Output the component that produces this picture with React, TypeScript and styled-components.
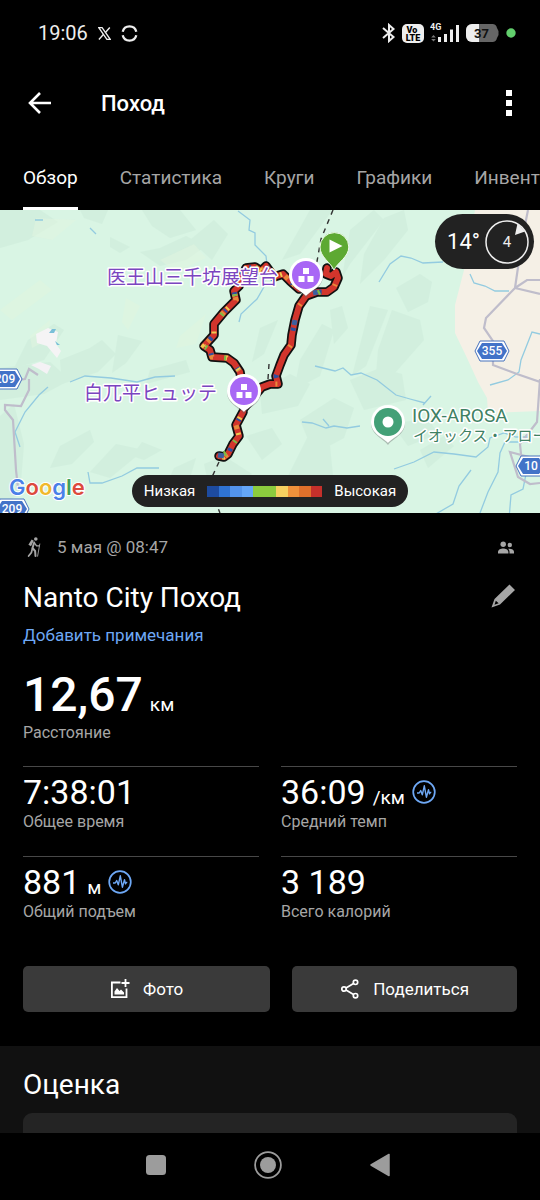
import React from 'react';
import styled, { createGlobalStyle } from 'styled-components';

const GlobalStyle = createGlobalStyle`
  * { box-sizing: border-box; }
  html, body { margin: 0; background: #000; }
  body {
    font-family: Roboto, "Noto Sans CJK JP", sans-serif;
    color: #fff;
    overflow-x: hidden;
  }
  button { font: inherit; color: inherit; border: 0; padding: 0; background: none; cursor: pointer; }
  svg { display: block; flex: none; }
`;

const Screen = styled.div`
  min-height: 100vh;
  display: flex;
  flex-direction: column;
  background: #000;
  overflow: hidden;
`;

const StatusBar = styled.div`
  height: 66px;
  padding: 0 24px 0 38px;
  display: flex;
  align-items: center;
  justify-content: space-between;
`;

const StatusGroup = styled.div<{ $gap: number }>`
  display: flex;
  align-items: center;
  gap: ${(p) => p.$gap}px;
`;

const Clock = styled.span`
  font-size: 20px;
  line-height: 24px;
  color: #eee;
`;

const AppBar = styled.header`
  height: 76px;
  padding: 0 24px 0 26px;
  display: flex;
  align-items: center;
`;

const IconButton = styled.button`
  display: flex;
  align-items: center;
  justify-content: center;
`;

const ScreenTitle = styled.h1`
  flex: 1;
  margin: 0 0 0 48px;
  font-size: 22px;
  line-height: 28px;
  font-weight: 500;
`;

const Tabs = styled.nav`
  height: 68px;
  padding-left: 23px;
  display: flex;
  gap: 42px;
  overflow: hidden;
`;

const Tab = styled.button<{ $active?: boolean }>`
  flex: none;
  height: 68px;
  font-size: 19px;
  line-height: 24px;
  padding-top: 6px;
  color: ${(p) => (p.$active ? '#fff' : '#a6a6a6')};
  border-bottom: 3px solid ${(p) => (p.$active ? '#fff' : 'transparent')};
`;

const MapArea = styled.section`
  position: relative;
  height: 303px;
  background: #d9f5e4;
  overflow: hidden;
  display: flex;
  flex-direction: column;
  justify-content: space-between;
`;

const MapCanvas = styled.svg`
  position: absolute;
  inset: 0;
  width: 100%;
  height: 100%;
`;

const Weather = styled.div`
  position: relative;
  align-self: flex-end;
  margin: 4px 6px 0 0;
  height: 55px;
  padding: 0 4px 0 12px;
  border-radius: 28px;
  background: #222;
  display: flex;
  align-items: center;
  gap: 4px;
  font-size: 22px;
`;

const Legend = styled.div`
  position: relative;
  align-self: center;
  margin-bottom: 6px;
  height: 32px;
  padding: 0 12px;
  border-radius: 16px;
  background: #222;
  display: flex;
  align-items: center;
  gap: 12px;
  font-size: 15px;
`;

const Scale = styled.div`
  display: flex;
  width: 115px;
  height: 11px;
`;

const ScaleStep = styled.span<{ $color: string }>`
  flex: 1;
  background: ${(p) => p.$color};
`;

const Summary = styled.main`
  padding: 0 23px 34px;
`;

const MetaRow = styled.div`
  height: 68px;
  display: flex;
  align-items: center;
  padding-right: 3px;
  color: #a6a6a6;
  font-size: 17px;
`;

const MetaDate = styled.span`
  flex: 1;
  margin-left: 13px;
`;

const TitleRow = styled.div`
  display: flex;
  align-items: center;
  justify-content: space-between;
  padding-right: 2px;
`;

const Title = styled.h2`
  margin: 0;
  font-size: 28px;
  line-height: 34px;
  font-weight: 400;
`;

const NotesLink = styled.a`
  display: block;
  width: fit-content;
  margin: 8px 0 20px;
  font-size: 17px;
  line-height: 24px;
  color: #6ea8f5;
  text-decoration: none;
`;

const Value = styled.div<{ $large?: boolean }>`
  display: flex;
  align-items: baseline;
  gap: 7px;
  height: ${(p) => (p.$large ? 56 : 40)}px;
  font-size: ${(p) => (p.$large ? 48 : 34)}px;
  line-height: ${(p) => (p.$large ? 56 : 40)}px;
  font-weight: ${(p) => (p.$large ? 500 : 400)};
`;

const Unit = styled.span`
  font-size: 19px;
  line-height: 24px;
  font-weight: 400;
`;

const Badge = styled.span`
  align-self: center;
`;

const Label = styled.div`
  font-size: 16px;
  line-height: 20px;
  color: #a6a6a6;
`;

const StatGrid = styled.div`
  margin-top: 23px;
  display: grid;
  grid-template-columns: 1fr 1fr;
  gap: 24px 22px;
`;

const Stat = styled.div`
  border-top: 1px solid #484848;
  padding-top: 5px;
`;

const Actions = styled.div`
  margin-top: 44px;
  display: grid;
  grid-template-columns: 11fr 10fr;
  gap: 22px;
`;

const ActionButton = styled.button`
  height: 46px;
  border-radius: 5px;
  background: #3a3a3a;
  display: flex;
  align-items: center;
  justify-content: center;
  gap: 13px;
  font-size: 17px;
`;

const Rating = styled.section`
  flex: 1;
  padding: 22px 23px 0;
  background: #111;
  display: flex;
  flex-direction: column;
`;

const RatingCard = styled.div`
  flex: 1;
  min-height: 19px;
  margin-top: 11px;
  border-radius: 9px 9px 0 0;
  background: #242424;
`;

const SystemNav = styled.nav`
  height: 67px;
  padding: 0 4px 4px 0;
  display: flex;
  justify-content: center;
  align-items: center;
`;

const SystemButton = styled.button`
  width: 112px;
  height: 48px;
  display: flex;
  align-items: center;
  justify-content: center;
`;

const TrendIcon = () => (
  <svg width="24" height="24" viewBox="0 0 24 24" fill="none" stroke="#6ea8f5">
    <circle cx="12" cy="12" r="10.8" strokeWidth="1.7" />
    <path d="M5 13h2.2l1.5-2.4 1.6 4.2 2-9 2.1 11.4 2.1-7.6 1 4.2 1-1.4h.8" strokeWidth="1.4" strokeLinejoin="round" />
  </svg>
);

const HikerIcon = () => (
  <svg width="21" height="22" viewBox="0 0 21 22" fill="none" stroke="#a6a6a6" strokeLinecap="round">
    <circle cx="12.8" cy="3" r="1.8" fill="#a6a6a6" stroke="none" />
    <path d="M8.600 3.600 5.400 8.800l2.600 1.400 2.800-5.400z" fill="#a6a6a6" stroke="none" />
    <path d="M11.200 6.500 9.500 12l2.600 3 .4 5" strokeWidth="2" />
    <path d="m9.400 12.500-1 4L5.600 20" strokeWidth="1.700" />
    <path d="m11.800 7.500 1.800 2.400h2.600" strokeWidth="1.300" />
    <path d="m16.800 8-2.200 12.200" strokeWidth=".9" />
  </svg>
);

const PeopleIcon = () => (
  <svg width="16" height="13" viewBox="0 0 16 13" fill="#a6a6a6">
    <circle cx="5.200" cy="3.200" r="2.700" />
    <circle cx="11.800" cy="4" r="2.200" />
    <path d="M0 12.500V11c0-2.600 3-3.600 5.200-3.600S10.400 8.400 10.400 11v1.500zM11.500 12.500V11c0-1.400-.5-2.400-1.300-3.200 2.800-.4 5.800.6 5.800 3v1.700z" />
  </svg>
);

const SCALE = ['#1d4b9f', '#2f73d2', '#5394ec', '#64a6f8', '#8ccb3e', '#8ccb3e', '#f7d060', '#f0913b', '#e0702b', '#c4302b'];

const ROUTES = [
  'M327 58 L326 64 L331 66 L336 62 L338 68 L334 77 L327 82 L317 82 L306 86 L299 96 L295 110 L292 125 L291 135 L284 145 L280 155 L276 166 L278 174 L270 174 L262 177 L244 198',
  'M299 79 L290 71 L283 64 L274 67 L266 56 L261 61 L255 57 L246 58 L239 76 L234 81 L236 90 L224 102 L214 114 L214 125 L204 136 L210 140 L212 147 L227 148 L234 153 L240 162 L243 180',
  'M243 202 L236 215 L239 226 L233 234 L228 244 L224 247 L219 246',
];

const SHADES = [
  'M0 0h40l18 12-30 18-28 8z', 'M80 0h28l-6 14-18-6z', 'M110 27l20 10-10 6-10-6z',
  'M140 42l20-4 26-12 20 10-20 14-26 6z', 'M28 130l26-16 10 6-20 30-30 8z',
  'M60 150l30-12 12-8 14 14-18 18-36 12z', 'M118 125l24 6-16 22-14 10z',
  'M0 158l50-6 20 18-26 14-44 6z', 'M142 0h38l16 20-26 8-18-12z', 'M190 30l24-20 14 14-16 26z',
  'M310 0l24-2-34 46-18 6z', 'M350 20l24-20 10 10-34 44-8 14z', 'M384 8l20-8 4 20-24 30-24 24 4-30z',
  'M396 78l24-14 12 8-4 20-20 10z', 'M392 100l28 10 4 20-30 34-20 26 4-50z',
  'M370 96l18 4-22 56-14 10z', 'M260 118l18-8-14 34-12 8z', 'M300 150l22-36 12 6-14 46-26 14z',
  'M330 100l12-4 6 22-14 16z', 'M60 236l30-16 4 12-22 22-22 4z', 'M90 262l26-28 28 6-34 28z',
  'M142 232l20 8-18 10-12-4z', 'M0 206l14-12 10 40-4 50-20 12z', 'M260 182l30-18 20 10-12 22-36 8z',
  'M300 210l34-22 20 10-10 30-30 16z', 'M286 270l22-44 22 10 4 40-20 14z',
  'M350 170l30-12 22 6 4 26-42 10z', 'M204 254l20-8 28 18-14 14-30-6z',
  'M246 226l26-8 10 16-20 16z', 'M420 240l24-14 10 10-26 22z', 'M392 214l36-6 10 16-30 12z',
  'M150 160l36-10 4 12-44 12z', 'M174 258l22-10-6 20-26 12z',
];

const RouteLine = ({ d }: { d: string }) => (
  <g fill="none" strokeLinejoin="round">
    <path d={d} stroke="#111" strokeWidth="9.500" strokeLinecap="round" />
    <path d={d} stroke="#d2352c" strokeWidth="6" strokeLinecap="round" />
  </g>
);

const ROUTE_TINTS = [
  { color: '#e8893a', dash: '3 17 4 29', offset: 5 },
  { color: '#2c4f9f', dash: '3 19 2 31', offset: 14 },
  { color: '#efc94f', dash: '2 27 2 15', offset: 23 },
  { color: '#7dbb45', dash: '2 39 2 23', offset: 9 },
];

const PlacePin = ({ x, y, children, color }: { x: number; y: number; color: string; children: React.ReactNode }) => (
  <g transform={`translate(${x} ${y})`}>
    <path d="M0 22C-4 16-17 12-17 0a17 17 0 0 1 34 0C17 12 4 16 0 22Z" fill="#666" opacity=".4" transform="translate(0 1)" />
    <path d="M0 21C-4 16-17 12-17 0a17 17 0 0 1 34 0C17 12 4 16 0 21Z" fill="#fff" />
    <circle r="14" fill={color} />
    {children}
  </g>
);

const Blocks = () => <path d="M-3-7h6v6h-6zM-7.500 1h6v6h-6zM1.500 1h6v6h-6z" fill="#fff" />;

const Shield = ({ x, y, text }: { x: number; y: number; text: string }) => {
  const half = text.length > 2 ? 16 : 14;
  const outline = (w: number, h: number) =>
    `M${-w} 0L${-w + 5} ${-h}H${w - 5}L${w} 0L${w - 5} ${h}H${-w + 5}Z`;
  return (
    <g transform={`translate(${x} ${y})`} strokeLinejoin="round">
      <path d={outline(half + 1, 10)} fill="#fff" stroke="#4672bd" strokeWidth="1" />
      <path d={outline(half - 1, 8)} fill="#4273c8" />
      <text y="4" textAnchor="middle" fontSize="12" fontWeight="500" fill="#fff">{text}</text>
    </g>
  );
};

const haloProps = { stroke: '#fff', strokeWidth: 3, strokeLinejoin: 'round' as const, paintOrder: 'stroke' };

const TrailMap = () => (
  <MapCanvas viewBox="0 0 540 303" preserveAspectRatio="xMidYMid slice" role="img" aria-label="Карта маршрута">
    <rect width="540" height="303" fill="#d9f5e4" />
    <g fill="#ccebda" opacity=".5">
      {SHADES.map((d) => <path key={d} d={d} />)}
    </g>
    <g fill="#e2f5e0" opacity=".5">
      <path d="M36 8l40 2-24 20-20-4zM160 50l34-16 12 14-30 14zM126 88l14 8-12 24-6-8zM0 100l40-30 12 10-40 30z" />
      <path d="M30 126l20-16-2 20-16 8zM180 126l26-22-10 30-20 4z" />
    </g>
    <path d="M475 0h65v201l-52 2-1-15-9-16-11-24-12-25v-28l9-35z" fill="#f5f0e6" />
    <path d="M36 124l12-6 10 4-2 12 5 7-4 7-10-12-10-3z" fill="#f5f4f5" />
    <path d="M49 123l3-4 4 0-2 4zM55 131l5 4-3 0z" fill="#79bfd8" />
    <path d="M31 155l9-3 11 4-4 8-8-5z" fill="#f4f2f5" />
    <g fill="none" stroke="#93cbe0" strokeWidth="1.300">
      <path d="M35 10h8M90 18l6 6M238 1l12 9-1 10 6 3v12l11 11 1 9-2 20-8 14-16 15-2 8M379 72l11-18 11-8 10 2 12 5 20-1" />
      <path d="M470 64l4 9 11 3 10 5 14 0M540 124l-8-2-11 28-2 12-11 8-18 5" />
      <path d="M20 237l-5-15 10-20 14-17 9-8M70 172l15-6 26 2 26 4 18-5 20-1M88 262l2 11h12l20-7 15-8h22" />
      <path d="M315 156l20 5 8-3 8 7 10-2 16 7 19 15 14 4 15 4M302 212l10 1 14 5 8-2 13 2 13-2M323 209l6 7M423 195l8-9" />
      <path d="M394 259l20-7 20-10 20 2 22 3 12-10 2-9 14-5 12 4h16M471 260l-12 16-6 18-24 14M528 232h-23l-5 11-2 19-10 20-8 21M540 246l-14 18-3 15-12 6-2 24" />
    </g>
    <g fill="none" stroke="#bfbdcb" strokeWidth="2.200">
      <path d="M38 165l-9-6-4 10-7 1-5-9M29 169v11l-8 16-16-1 0 5 8 10 3 50 2 18" />
      <path d="M528 0l-6 30-7 48-29 30-2 10 9 13v24l24 9 23 8M515 78l12-8h13M515 78l25 6M540 169l-3 43-17 22 2 20M540 250l-30-8 8 25 12 7 10-1" />
    </g>
    <g fill="none" stroke="#333" strokeWidth="1.400" strokeDasharray="5 5">
      <path d="M333 0l-12 29-5 28M269 154l-1 15M219 252l-7 15v16l8 20" />
    </g>
    {ROUTES.map((d) => <RouteLine key={d} d={d} />)}
    <g fill="none" strokeWidth="5">
      {ROUTES.slice(1).map((d) =>
        ROUTE_TINTS.map((t) => (
          <path key={t.color + d} d={d} stroke={t.color} strokeDasharray={t.dash} strokeDashoffset={t.offset} />
        )),
      )}
      <path d={ROUTES[0]} stroke="#e8893a" strokeDasharray="2 41" strokeDashoffset="12" />
      <path d={ROUTES[0]} stroke="#2c4f9f" strokeDasharray="3 48" strokeDashoffset="3" />
      <path d="M318 82l-5 1M295 110l-1 5M224 246l-6-1" stroke="#3c5f9f" />
      <path d="M320 82l-2 1M226 243l-2 1" stroke="#7dbb45" />
    </g>
    <g fontFamily='Roboto, "Noto Sans CJK JP", sans-serif'>
      <text x="107" y="74" fontSize="19" fill="#7b45c0" {...haloProps}>医王山三千坊展望台</text>
      <text x="84" y="190" fontSize="19" fill="#7b45c0" {...haloProps}>白兀平ヒュッテ</text>
      <text x="412" y="212" fontSize="19" fill="#3f8163" {...haloProps}>IOX-AROSA</text>
      <text x="413" y="231" fontSize="15" fill="#3f8163" {...haloProps}>イオックス・アローザ</text>
      <Shield x={492} y={141} text="355" />
      <Shield x={531} y={256} text="10" />
      <Shield x={5} y={169} text="209" />
      <Shield x={12} y={299} text="209" />
    </g>
    <PlacePin x={306} y={65} color="#a867f5"><Blocks /></PlacePin>
    <PlacePin x={244} y={181} color="#a867f5"><Blocks /></PlacePin>
    <PlacePin x={388} y={212} color="#43a077"><circle r="5.500" fill="#fff" /></PlacePin>
    <path d="M334 60C331 53 320 47 320 37a14.400 14.400 0 0 1 28.800 0C348.800 47 337 53 334 60Z" fill="#5da932" stroke="#eefbe8" strokeWidth="1" />
    <path d="M329.500 29.500v13l13-6.500z" fill="#fff" />
    <text x="9" y="285" fontFamily="Inter, sans-serif" fontSize="22" fontWeight="600" {...haloProps} strokeWidth={2}>
      <tspan fill="#4a80e8">G</tspan>
      <tspan fill="#dc4a3d">o</tspan>
      <tspan fill="#f0b92d">o</tspan>
      <tspan fill="#4a80e8">g</tspan>
      <tspan fill="#3fa15a">l</tspan>
      <tspan fill="#dc4a3d">e</tspan>
    </text>
  </MapCanvas>
);

const TABS = ['Обзор', 'Статистика', 'Круги', 'Графики', 'Инвентарь'];

const STATS = [
  { value: '7:38:01', label: 'Общее время' },
  { value: '36:09', unit: '/км', label: 'Средний темп', trend: true },
  { value: '881', unit: 'м', label: 'Общий подъем', trend: true },
  { value: '3 189', label: 'Всего калорий' },
];

export default function App() {
  return (
    <Screen>
      <GlobalStyle />
      <StatusBar>
        <StatusGroup $gap={10}>
          <Clock>19:06</Clock>
          <svg width="13" height="13" viewBox="0 0 13 13" fill="none" stroke="#eee">
            <path d="M.8.7h3.300l8.100 11.600H8.900z" strokeWidth="1.300" />
            <path d="M11.800.5 7.200 5.700M5.600 7.300.9 12.500" strokeWidth="1.400" />
          </svg>
          <svg width="17" height="17" viewBox="0 0 17 17" fill="none" stroke="#eee" strokeWidth="2.300">
            <path d="M1.700 6.800a7 7 0 0 1 13.600 0M1.700 10.200a7 7 0 0 0 13.600 0" />
          </svg>
        </StatusGroup>
        <StatusGroup $gap={6}>
          <svg width="15" height="20" viewBox="0 0 15 20" fill="none" stroke="#eee" strokeWidth="2">
            <path d="M2 5 12.500 14 8 18v-16L12.500 6 2 15" />
          </svg>
          <svg width="22" height="19" viewBox="0 0 22 19" fontFamily="Roboto, sans-serif" fontWeight="900">
            <rect width="22" height="19" rx="5" fill="#eee" />
            <text x="10" y="9" fontSize="9" textAnchor="middle" fill="#000">Vo</text>
            <text x="11" y="17" fontSize="9" textAnchor="middle" fill="#000">LTE</text>
          </svg>
          <svg width="30" height="20" viewBox="0 0 30 20" fill="#eee">
            <text x="0" y="7" fontSize="9" fontWeight="700" fontFamily="Roboto, sans-serif">4G</text>
            <path d="M8 14h3v5H8zM14 11h3v8h-3zM20 6.500h3V19h-3zM26 2h3v17h-3z" />
            <path d="M1.200 14.500 3.500 12l2.300 2.500zM1.200 16 3.500 18.500 5.800 16z" fill="#777" />
          </svg>
          <svg width="33" height="18" viewBox="0 0 33 18">
            <path d="M6 0h20a5 5 0 0 1 5 4l1.500 3v4L31 14a5 5 0 0 1-5 4H6a6 6 0 0 1-6-6V6a6 6 0 0 1 6-6Z" fill="#666" />
            <path d="M6 0h7v18H6a6 6 0 0 1-6-6V6a6 6 0 0 1 6-6Z" fill="#eee" />
            <text x="15.500" y="13.500" fontSize="13" fontWeight="700" textAnchor="middle" fill="#111" fontFamily="Roboto, sans-serif">37</text>
          </svg>
          <svg width="11" height="10" viewBox="0 0 11 10"><circle cx="6" cy="5" r="4.700" fill="#62cf6d" /></svg>
        </StatusGroup>
      </StatusBar>

      <AppBar>
        <IconButton aria-label="Назад">
          <svg width="27" height="24" viewBox="0 0 27 24" fill="none" stroke="#fff" strokeWidth="2.600">
            <path d="M25 11H4M14 1 4 11l10 10" />
          </svg>
        </IconButton>
        <ScreenTitle>Поход</ScreenTitle>
        <IconButton aria-label="Меню">
          <svg width="14" height="28" viewBox="0 0 14 28" fill="#fff">
            <path d="M4 0h6v6H4zM4 10h6v6H4zM4 20h6v6H4z" />
          </svg>
        </IconButton>
      </AppBar>

      <Tabs>
        {TABS.map((name, i) => <Tab key={name} $active={i === 0}>{name}</Tab>)}
      </Tabs>

      <MapArea>
        <TrailMap />
        <Weather>
          14°
          <svg width="46" height="46" viewBox="0 0 46 46" fill="none">
            <circle cx="23" cy="23" r="21" stroke="#eee" strokeWidth="1.500" />
            <path d="m33.500 4.500 7.500 8-10 3.500z" fill="#eee" />
            <text x="23" y="28" fontSize="15" textAnchor="middle" fill="#eee">4</text>
          </svg>
        </Weather>
        <Legend>
          Низкая
          <Scale>
            {SCALE.map((color, i) => <ScaleStep key={i} $color={color} />)}
          </Scale>
          Высокая
        </Legend>
      </MapArea>

      <Summary>
        <MetaRow>
          <HikerIcon />
          <MetaDate>5 мая @ 08:47</MetaDate>
          <PeopleIcon />
        </MetaRow>
        <TitleRow>
          <Title>Nanto City Поход</Title>
          <IconButton aria-label="Изменить название">
            <svg width="24" height="28" viewBox="0 0 24 28" fill="#a6a6a6">
              <path fillRule="evenodd" d="M18.500.5 24 6 9 20.500.5 23.500 3.500 15zM4.800 16.800l-1.300 4 4.200-1.500z" />
            </svg>
          </IconButton>
        </TitleRow>
        <NotesLink href="#notes">Добавить примечания</NotesLink>
        <Value $large>12,67<Unit>км</Unit></Value>
        <Label>Расстояние</Label>

        <StatGrid>
          {STATS.map((s) => (
            <Stat key={s.label}>
              <Value>
                {s.value}
                {s.unit && <Unit>{s.unit}</Unit>}
                {s.trend && <Badge><TrendIcon /></Badge>}
              </Value>
              <Label>{s.label}</Label>
            </Stat>
          ))}
        </StatGrid>

        <Actions>
          <ActionButton>
            <svg width="20" height="20" viewBox="0 0 20 20" fill="none" stroke="#fff" strokeWidth="1.800">
              <path d="M10.500 3.500H1.900v14.600h14.600V9.500M15.500 0v8M11.500 4h8" />
              <path d="M4.500 15.500v-3L7 9l2.500 3 1.500-1.500 3 3v2z" fill="#fff" stroke="none" />
            </svg>
            Фото
          </ActionButton>
          <ActionButton>
            <svg width="20" height="20" viewBox="0 0 20 20" fill="none" stroke="#fff" strokeWidth="1.700">
              <circle cx="4" cy="10" r="2.200" />
              <circle cx="15.500" cy="3.300" r="2.200" />
              <circle cx="15.500" cy="16.700" r="2.200" />
              <path d="m6 8.900 7.500-4.500M6 11.100l7.500 4.500" />
            </svg>
            Поделиться
          </ActionButton>
        </Actions>
      </Summary>

      <Rating>
        <Title>Оценка</Title>
        <RatingCard />
      </Rating>

      <SystemNav>
        <SystemButton aria-label="Недавние">
          <svg width="22" height="22" viewBox="0 0 22 22"><rect x="1" y="1" width="20" height="20" rx="3.500" fill="#9c9c9c" /></svg>
        </SystemButton>
        <SystemButton aria-label="Домой">
          <svg width="28" height="28" viewBox="0 0 28 28">
            <circle cx="14" cy="14" r="12.900" fill="none" stroke="#9c9c9c" strokeWidth="1.800" />
            <circle cx="14" cy="14" r="8" fill="#9c9c9c" />
          </svg>
        </SystemButton>
        <SystemButton aria-label="Обратно">
          <svg width="22" height="24" viewBox="0 0 22 24">
            <path d="M2 12 20 1.500v21z" fill="#9c9c9c" stroke="#9c9c9c" strokeWidth="1.500" strokeLinejoin="round" />
          </svg>
        </SystemButton>
      </SystemNav>
    </Screen>
  );
}
